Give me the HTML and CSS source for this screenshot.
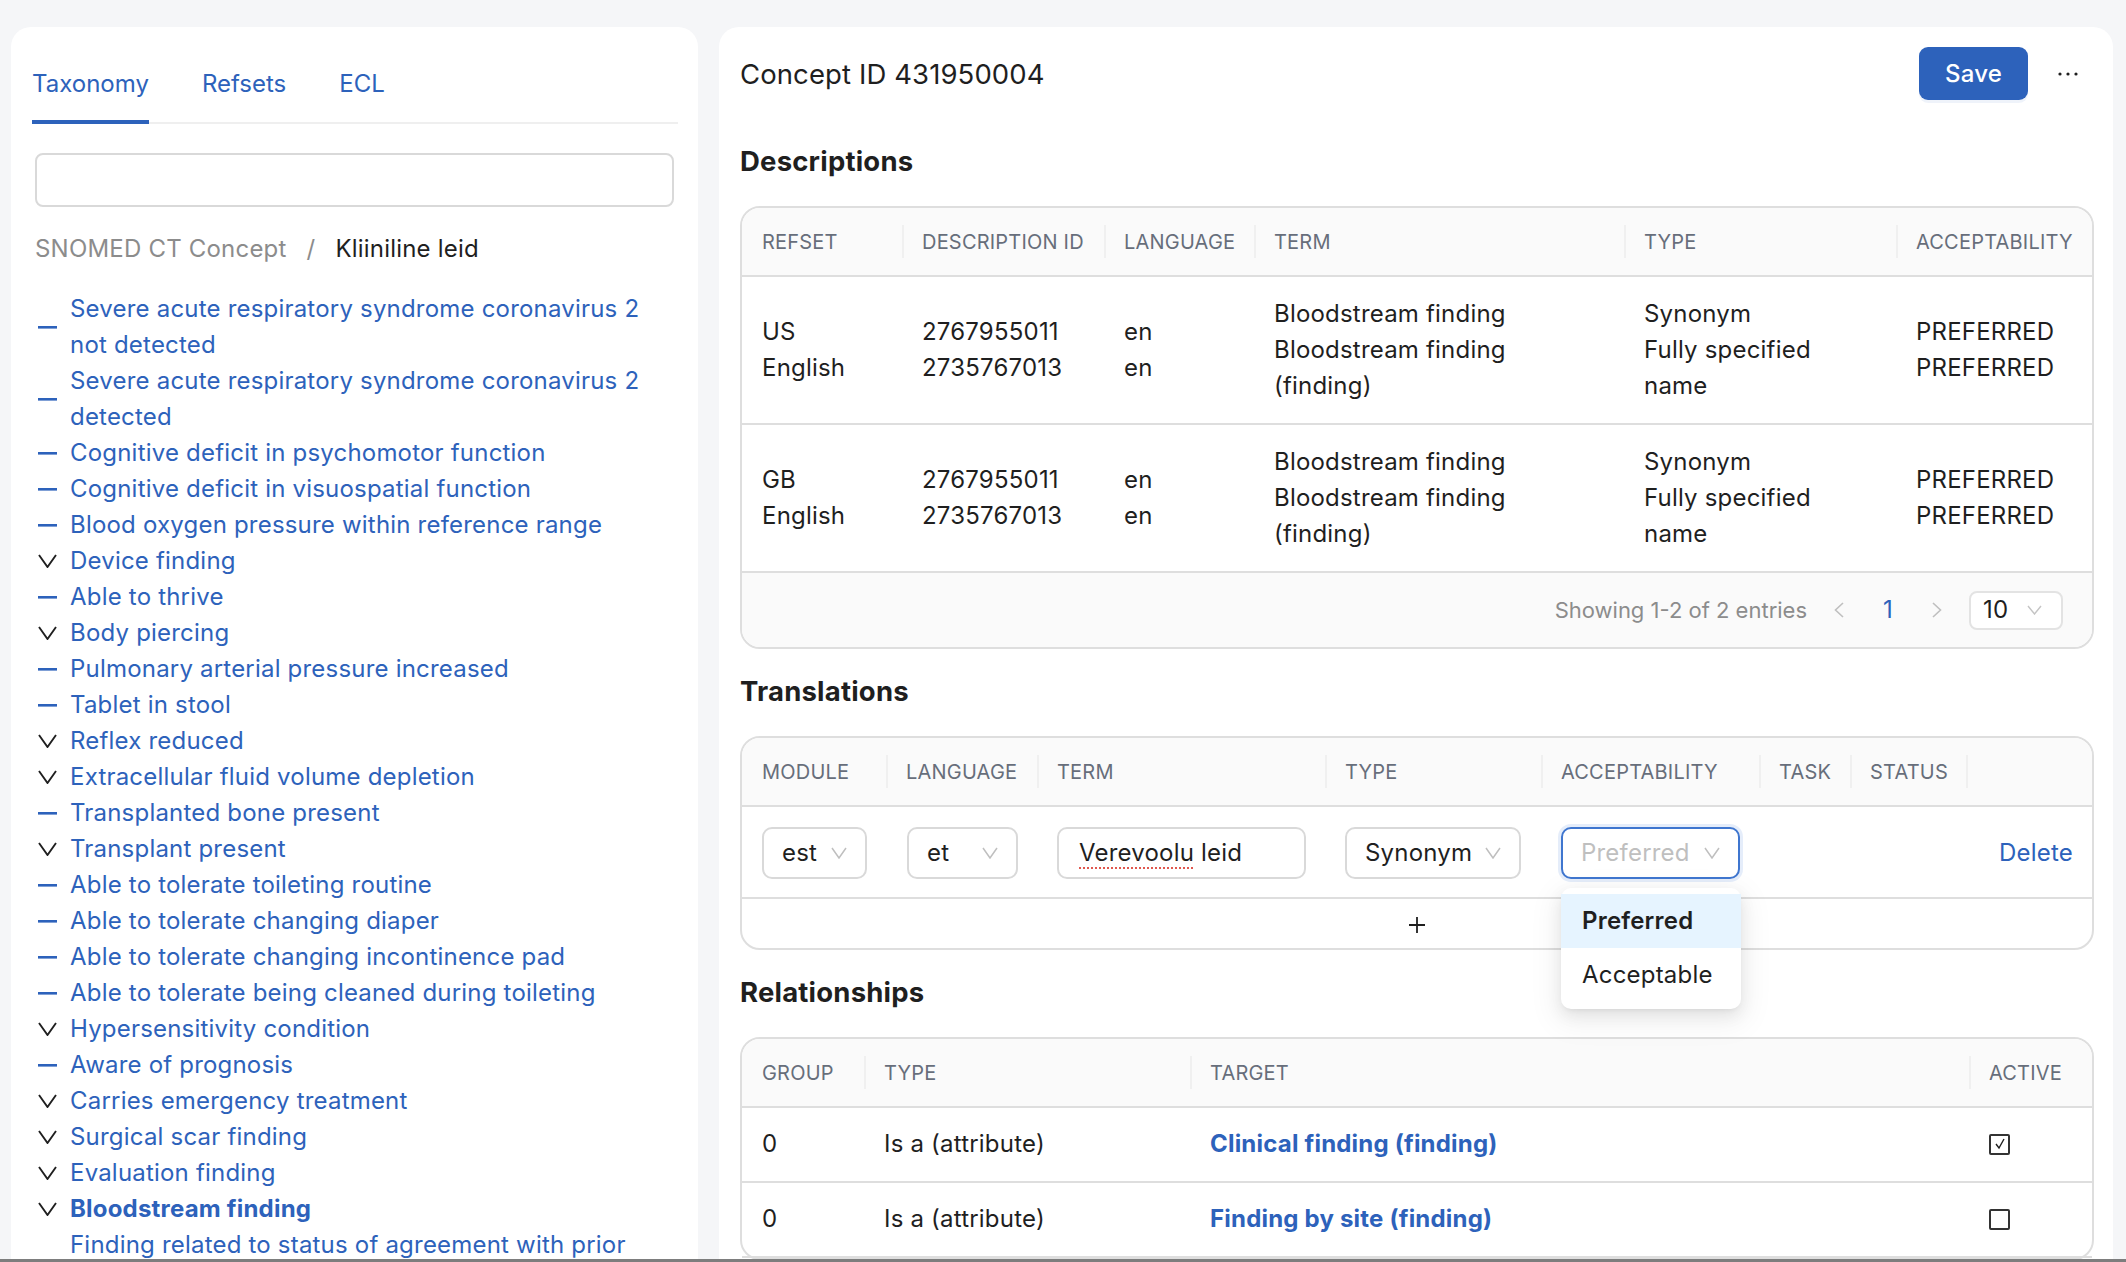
FILE: index.html
```html
<!DOCTYPE html>
<html lang="en">
<head>
<meta charset="utf-8">
<title>Concept ID 431950004</title>
<link rel="stylesheet" href="styles.css">
</head>
<body>
<div class="page">
  <aside class="card sidebar">
    <nav class="tabs">
      <span class="tab active">Taxonomy</span>
      <span class="tab">Refsets</span>
      <span class="tab">ECL</span>
    </nav>
    <div class="search"></div>
    <div class="crumbs">
      <span class="crumb-root">SNOMED CT Concept</span>
      <span class="crumb-sep">/</span>
      <span class="crumb-current">Kliiniline leid</span>
    </div>
    <ul class="tree">
      <li class="node"><span class="node-icon"><svg class="ic-dash" width="19" height="3" viewBox="0 0 19 3"><rect width="19" height="2.6" fill="currentColor"/></svg></span><span class="node-label">Severe acute respiratory syndrome coronavirus 2 not detected</span></li>
      <li class="node"><span class="node-icon"><svg class="ic-dash" width="19" height="3" viewBox="0 0 19 3"><rect width="19" height="2.6" fill="currentColor"/></svg></span><span class="node-label">Severe acute respiratory syndrome coronavirus 2 detected</span></li>
      <li class="node"><span class="node-icon"><svg class="ic-dash" width="19" height="3" viewBox="0 0 19 3"><rect width="19" height="2.6" fill="currentColor"/></svg></span><span class="node-label">Cognitive deficit in psychomotor function</span></li>
      <li class="node"><span class="node-icon"><svg class="ic-dash" width="19" height="3" viewBox="0 0 19 3"><rect width="19" height="2.6" fill="currentColor"/></svg></span><span class="node-label">Cognitive deficit in visuospatial function</span></li>
      <li class="node"><span class="node-icon"><svg class="ic-dash" width="19" height="3" viewBox="0 0 19 3"><rect width="19" height="2.6" fill="currentColor"/></svg></span><span class="node-label">Blood oxygen pressure within reference range</span></li>
      <li class="node"><span class="node-icon"><svg class="ic-chev" width="19" height="14" viewBox="0 0 19 14"><polyline points="1,1 9.5,13 18,1" fill="none" stroke="currentColor" stroke-width="1.9"/></svg></span><span class="node-label">Device finding</span></li>
      <li class="node"><span class="node-icon"><svg class="ic-dash" width="19" height="3" viewBox="0 0 19 3"><rect width="19" height="2.6" fill="currentColor"/></svg></span><span class="node-label">Able to thrive</span></li>
      <li class="node"><span class="node-icon"><svg class="ic-chev" width="19" height="14" viewBox="0 0 19 14"><polyline points="1,1 9.5,13 18,1" fill="none" stroke="currentColor" stroke-width="1.9"/></svg></span><span class="node-label">Body piercing</span></li>
      <li class="node"><span class="node-icon"><svg class="ic-dash" width="19" height="3" viewBox="0 0 19 3"><rect width="19" height="2.6" fill="currentColor"/></svg></span><span class="node-label">Pulmonary arterial pressure increased</span></li>
      <li class="node"><span class="node-icon"><svg class="ic-dash" width="19" height="3" viewBox="0 0 19 3"><rect width="19" height="2.6" fill="currentColor"/></svg></span><span class="node-label">Tablet in stool</span></li>
      <li class="node"><span class="node-icon"><svg class="ic-chev" width="19" height="14" viewBox="0 0 19 14"><polyline points="1,1 9.5,13 18,1" fill="none" stroke="currentColor" stroke-width="1.9"/></svg></span><span class="node-label">Reflex reduced</span></li>
      <li class="node"><span class="node-icon"><svg class="ic-chev" width="19" height="14" viewBox="0 0 19 14"><polyline points="1,1 9.5,13 18,1" fill="none" stroke="currentColor" stroke-width="1.9"/></svg></span><span class="node-label">Extracellular fluid volume depletion</span></li>
      <li class="node"><span class="node-icon"><svg class="ic-dash" width="19" height="3" viewBox="0 0 19 3"><rect width="19" height="2.6" fill="currentColor"/></svg></span><span class="node-label">Transplanted bone present</span></li>
      <li class="node"><span class="node-icon"><svg class="ic-chev" width="19" height="14" viewBox="0 0 19 14"><polyline points="1,1 9.5,13 18,1" fill="none" stroke="currentColor" stroke-width="1.9"/></svg></span><span class="node-label">Transplant present</span></li>
      <li class="node"><span class="node-icon"><svg class="ic-dash" width="19" height="3" viewBox="0 0 19 3"><rect width="19" height="2.6" fill="currentColor"/></svg></span><span class="node-label">Able to tolerate toileting routine</span></li>
      <li class="node"><span class="node-icon"><svg class="ic-dash" width="19" height="3" viewBox="0 0 19 3"><rect width="19" height="2.6" fill="currentColor"/></svg></span><span class="node-label">Able to tolerate changing diaper</span></li>
      <li class="node"><span class="node-icon"><svg class="ic-dash" width="19" height="3" viewBox="0 0 19 3"><rect width="19" height="2.6" fill="currentColor"/></svg></span><span class="node-label">Able to tolerate changing incontinence pad</span></li>
      <li class="node"><span class="node-icon"><svg class="ic-dash" width="19" height="3" viewBox="0 0 19 3"><rect width="19" height="2.6" fill="currentColor"/></svg></span><span class="node-label">Able to tolerate being cleaned during toileting</span></li>
      <li class="node"><span class="node-icon"><svg class="ic-chev" width="19" height="14" viewBox="0 0 19 14"><polyline points="1,1 9.5,13 18,1" fill="none" stroke="currentColor" stroke-width="1.9"/></svg></span><span class="node-label">Hypersensitivity condition</span></li>
      <li class="node"><span class="node-icon"><svg class="ic-dash" width="19" height="3" viewBox="0 0 19 3"><rect width="19" height="2.6" fill="currentColor"/></svg></span><span class="node-label">Aware of prognosis</span></li>
      <li class="node"><span class="node-icon"><svg class="ic-chev" width="19" height="14" viewBox="0 0 19 14"><polyline points="1,1 9.5,13 18,1" fill="none" stroke="currentColor" stroke-width="1.9"/></svg></span><span class="node-label">Carries emergency treatment</span></li>
      <li class="node"><span class="node-icon"><svg class="ic-chev" width="19" height="14" viewBox="0 0 19 14"><polyline points="1,1 9.5,13 18,1" fill="none" stroke="currentColor" stroke-width="1.9"/></svg></span><span class="node-label">Surgical scar finding</span></li>
      <li class="node"><span class="node-icon"><svg class="ic-chev" width="19" height="14" viewBox="0 0 19 14"><polyline points="1,1 9.5,13 18,1" fill="none" stroke="currentColor" stroke-width="1.9"/></svg></span><span class="node-label">Evaluation finding</span></li>
      <li class="node current"><span class="node-icon"><svg class="ic-chev" width="19" height="14" viewBox="0 0 19 14"><polyline points="1,1 9.5,13 18,1" fill="none" stroke="currentColor" stroke-width="1.9"/></svg></span><span class="node-label">Bloodstream finding</span></li>
      <li class="node"><span class="node-icon"><svg class="ic-dash" width="19" height="3" viewBox="0 0 19 3"><rect width="19" height="2.6" fill="currentColor"/></svg></span><span class="node-label">Finding related to status of agreement with prior notification</span></li>
    </ul>
  </aside>

  <main class="card detail">
    <header class="detail-head">
      <h1 class="concept-id">Concept ID 431950004</h1>
      <button class="btn-primary">Save</button>
      <button class="btn-more" aria-label="More"><svg width="20" height="4" viewBox="0 0 20 4"><circle cx="2" cy="2" r="1.6" fill="#1f1f1f"/><circle cx="10" cy="2" r="1.6" fill="#1f1f1f"/><circle cx="18" cy="2" r="1.6" fill="#1f1f1f"/></svg></button>
    </header>

    <h2 class="section-title">Descriptions</h2>
    <div class="table-box">
      <table class="grid">
        <thead>
          <tr>
            <th class="d-refset">REFSET</th>
            <th class="d-id">DESCRIPTION ID</th>
            <th class="d-lang">LANGUAGE</th>
            <th class="d-term">TERM</th>
            <th class="d-type">TYPE</th>
            <th class="d-acc">ACCEPTABILITY</th>
          </tr>
        </thead>
        <tbody>
          <tr>
            <td>US<br>English</td>
            <td>2767955011<br>2735767013</td>
            <td>en<br>en</td>
            <td>Bloodstream finding<br>Bloodstream finding<br>(finding)</td>
            <td>Synonym<br>Fully specified<br>name</td>
            <td>PREFERRED<br>PREFERRED</td>
          </tr>
          <tr>
            <td>GB<br>English</td>
            <td>2767955011<br>2735767013</td>
            <td>en<br>en</td>
            <td>Bloodstream finding<br>Bloodstream finding<br>(finding)</td>
            <td>Synonym<br>Fully specified<br>name</td>
            <td>PREFERRED<br>PREFERRED</td>
          </tr>
        </tbody>
      </table>
      <div class="table-foot">
        <span class="total">Showing 1-2 of 2 entries</span>
        <span class="pg-arrow"><svg width="10" height="16" viewBox="0 0 10 16"><polyline points="9,1 1.5,8 9,15" fill="none" stroke="currentColor" stroke-width="1.6"/></svg></span>
        <span class="pg-current">1</span>
        <span class="pg-arrow"><svg width="10" height="16" viewBox="0 0 10 16"><polyline points="1,1 8.5,8 1,15" fill="none" stroke="currentColor" stroke-width="1.6"/></svg></span>
        <span class="size-select">10<svg width="15" height="10" viewBox="0 0 15 10"><polyline points="1,1 7.5,9 14,1" fill="none" stroke="currentColor" stroke-width="1.4"/></svg></span>
      </div>
    </div>

    <h2 class="section-title">Translations</h2>
    <div class="table-box">
      <table class="grid">
        <thead>
          <tr>
            <th class="t-module">MODULE</th>
            <th class="t-lang">LANGUAGE</th>
            <th class="t-term">TERM</th>
            <th class="t-type">TYPE</th>
            <th class="t-acc">ACCEPTABILITY</th>
            <th class="t-task">TASK</th>
            <th class="t-status">STATUS</th>
            <th class="t-action"></th>
          </tr>
        </thead>
        <tbody>
          <tr class="edit-row">
            <td><span class="select w-module">est<svg width="16" height="12" viewBox="0 0 16 12"><polyline points="1,1 8,11 15,1" fill="none" stroke="currentColor" stroke-width="1.5"/></svg></span></td>
            <td><span class="select w-lang">et<svg width="16" height="12" viewBox="0 0 16 12"><polyline points="1,1 8,11 15,1" fill="none" stroke="currentColor" stroke-width="1.5"/></svg></span></td>
            <td><span class="text-input"><span class="misspelled">Verevoolu</span> leid</span></td>
            <td><span class="select w-type">Synonym<svg width="16" height="12" viewBox="0 0 16 12"><polyline points="1,1 8,11 15,1" fill="none" stroke="currentColor" stroke-width="1.5"/></svg></span></td>
            <td>
              <div class="select-wrap">
                <span class="select w-acc focused"><span class="placeholder">Preferred</span><svg width="16" height="12" viewBox="0 0 16 12"><polyline points="1,1 8,11 15,1" fill="none" stroke="currentColor" stroke-width="1.5"/></svg></span>
                <ul class="menu">
                  <li class="menu-item selected">Preferred</li>
                  <li class="menu-item">Acceptable</li>
                </ul>
              </div>
            </td>
            <td></td>
            <td></td>
            <td class="action"><span class="link">Delete</span></td>
          </tr>
          <tr class="add-row">
            <td colspan="8"><svg width="18" height="18" viewBox="0 0 18 18"><path d="M9 1v16M1 9h16" stroke="#1f1f1f" stroke-width="1.8"/></svg></td>
          </tr>
        </tbody>
      </table>
    </div>

    <h2 class="section-title">Relationships</h2>
    <div class="table-box">
      <table class="grid">
        <thead>
          <tr>
            <th class="r-group">GROUP</th>
            <th class="r-type">TYPE</th>
            <th class="r-target">TARGET</th>
            <th class="r-active">ACTIVE</th>
          </tr>
        </thead>
        <tbody>
          <tr class="rel-row">
            <td>0</td>
            <td>Is a (attribute)</td>
            <td><span class="link strong">Clinical finding (finding)</span></td>
            <td><span class="checkbox"><svg width="16" height="16" viewBox="0 0 16 16"><polyline points="4,8 7,12 12,3" fill="none" stroke="#1f1f1f" stroke-width="1.4"/></svg></span></td>
          </tr>
          <tr class="rel-row">
            <td>0</td>
            <td>Is a (attribute)</td>
            <td><span class="link strong">Finding by site (finding)</span></td>
            <td><span class="checkbox"></span></td>
          </tr>
        </tbody>
      </table>
    </div>
  </main>
</div>
<div class="dock-edge"></div>
</body>
</html>
```

FILE: styles.css
```css
* {
  box-sizing: border-box;
  margin: 0;
  padding: 0;
}

html, body {
  height: 100%;
}

body {
  background: #f5f6f8;
  font-family: Inter, "Noto Sans", sans-serif;
  font-size: 24px;
  line-height: 36px;
  letter-spacing: 0.2px;
  color: #1f1f1f;
  overflow: hidden;
}

.page {
  display: flex;
  align-items: flex-start;
  gap: 21px;
  padding: 27px 13px 0 11px;
  height: 100vh;
  overflow: hidden;
}

.card {
  background: #fff;
  border-radius: 20px;
  min-height: 1400px;
}

/* ---------- sidebar ---------- */
.sidebar {
  width: 687px;
  flex: none;
  padding: 39px 20px 0 21px;
}

.tabs {
  display: flex;
  gap: 53px;
  border-bottom: 2px solid #efefef;
}

.tab {
  color: #2d62bb;
  letter-spacing: 0;
  padding-bottom: 18px;
  border-bottom: 4px solid transparent;
  margin-bottom: -2px;
}

.tab.active {
  border-bottom-color: #2d62bb;
}

.search {
  height: 54px;
  margin: 29px 4px 0 3px;
  border: 2px solid #d9d9d9;
  border-radius: 8px;
}

.crumbs {
  display: flex;
  margin: 24px 0 0 3px;
  color: #8c8c8c;
}

.crumb-sep {
  margin: 0 20px;
}

.crumb-current {
  color: #1f1f1f;
}

.tree {
  list-style: none;
  margin: 24px 0 0 3px;
}

.node {
  display: flex;
  align-items: center;
  color: #2d62bb;
}

.node-icon {
  width: 35px;
  flex: none;
  display: flex;
  align-items: center;
  padding-left: 3px;
}

.ic-chev {
  color: #1f1f1f;
}

.node-label {
  flex: 1;
}

.node.current .node-label {
  font-weight: 700;
}

/* ---------- detail ---------- */
.detail {
  flex: 1;
  padding: 20px 19px 0 21px;
}

.detail-head {
  display: flex;
  align-items: center;
  height: 53px;
}

.concept-id {
  flex: 1;
  font-size: 27.5px;
  font-weight: 400;
  line-height: 36px;
  letter-spacing: 0.1px;
}

.btn-primary {
  width: 109px;
  height: 53px;
  border: 0;
  border-radius: 9px;
  background: #2d62bb;
  color: #fff;
  font-family: inherit;
  font-size: 24px;
  font-weight: 500;
  letter-spacing: 0.2px;
  box-shadow: 0 3px 0 rgba(45, 98, 187, 0.08);
}

.btn-more {
  display: flex;
  align-items: center;
  margin: 0 16px 0 30px;
  border: 0;
  background: none;
}

.section-title {
  font-size: 27.5px;
  font-weight: 700;
  line-height: 36px;
  margin: 43px 0 27px;
}

.table-box + .section-title {
  margin-top: 24px;
}

.table-box {
  border: 2px solid #dedede;
  border-radius: 20px;
}

.grid {
  width: 100%;
  table-layout: fixed;
  border-collapse: separate;
  border-spacing: 0;
}

.grid th {
  position: relative;
  height: 69px;
  padding: 0 20px;
  background: #fafafa;
  border-bottom: 2px solid #dedede;
  font-size: 20px;
  font-weight: 400;
  color: #676e7b;
  text-align: left;
  white-space: nowrap;
}

.grid th:first-child {
  border-top-left-radius: 18px;
}

.grid th:last-child {
  border-top-right-radius: 18px;
}

.grid th + th::before {
  content: "";
  position: absolute;
  left: 0;
  top: 50%;
  width: 2px;
  height: 33px;
  margin-top: -17px;
  background: #f0f0f0;
}

.grid td {
  padding: 19px 20px;
  vertical-align: middle;
  border-bottom: 2px solid #dedede;
}

/* descriptions columns */
.d-refset { width: 160px; }
.d-id { width: 202px; }
.d-lang { width: 150px; }
.d-term { width: 370px; }
.d-type { width: 272px; }
.d-acc { width: 196px; }

.table-foot {
  display: flex;
  align-items: center;
  justify-content: flex-end;
  height: 74px;
  padding-right: 29px;
  background: #fafafa;
  border-radius: 0 0 18px 18px;
}

.total {
  font-size: 22px;
  letter-spacing: 0;
  color: #8c8c8c;
  margin-right: 27px;
}

.pg-arrow {
  display: flex;
  color: #bfbfbf;
}

.pg-current {
  color: #2d62bb;
  margin: 0 39px;
}

.size-select {
  display: flex;
  align-items: center;
  justify-content: space-between;
  width: 94px;
  height: 39px;
  margin-left: 27px;
  padding: 0 19px 0 12px;
  border: 2px solid #e3e3e3;
  border-radius: 8px;
  background: #fff;
}

.size-select svg {
  color: #c4c4c4;
}

/* translations columns */
.t-module { width: 144px; }
.t-lang { width: 151px; }
.t-term { width: 288px; }
.t-type { width: 216px; }
.t-acc { width: 218px; }
.t-task { width: 91px; }
.t-status { width: 116px; }
.t-action { width: 126px; }

.edit-row td {
  padding: 20px 20px 18px;
}

.select {
  display: flex;
  align-items: center;
  justify-content: space-between;
  height: 52px;
  padding: 0 18px 0 18px;
  border: 2px solid #d9d9d9;
  border-radius: 10px;
  background: #fff;
}

.select svg {
  color: #bfbfbf;
  flex: none;
}

.w-module { width: 105px; }
.w-lang { width: 111px; }
.w-type { width: 176px; }
.w-acc { width: 179px; }

.edit-row td:nth-child(2) {
  padding-left: 21px;
}

.text-input {
  display: flex;
  align-items: center;
  width: 249px;
  height: 52px;
  padding: 0 20px;
  border: 2px solid #d9d9d9;
  border-radius: 10px;
  white-space: pre;
}

.misspelled {
  text-decoration: underline dotted #e0584f;
  text-decoration-thickness: 2px;
  text-underline-offset: 6px;
}

.select.focused {
  border-color: #3f76cf;
  box-shadow: 0 0 0 3px rgba(45, 110, 210, 0.12);
}

.placeholder {
  color: #bfbfbf;
}

.select-wrap {
  position: relative;
}

.menu {
  position: absolute;
  top: calc(100% + 9px);
  left: 0;
  z-index: 5;
  width: 180px;
  padding: 6px 0 7px;
  list-style: none;
  background: #fff;
  border-radius: 10px;
  box-shadow: 0 6px 16px rgba(0, 0, 0, 0.08), 0 3px 6px -4px rgba(0, 0, 0, 0.12), 0 9px 28px 8px rgba(0, 0, 0, 0.05);
}

.menu-item {
  display: flex;
  align-items: center;
  height: 54px;
  padding: 0 21px;
}

.menu-item.selected {
  background: #e6f4ff;
  font-weight: 600;
}

.action {
  text-align: right;
}

.grid td.action {
  padding-right: 19px;
}

.link {
  color: #2d62bb;
}

.link.strong {
  font-weight: 700;
}

.add-row td {
  height: 49px;
  padding: 0;
  border-bottom: 0;
  text-align: center;
}

.add-row svg {
  display: inline-block;
  vertical-align: middle;
}

/* relationships columns */
.r-group { width: 122px; }
.r-type { width: 326px; }
.r-target { width: 779px; }
.r-active { width: 123px; }

.rel-row td {
  padding: 18px 20px 19px;
}

.checkbox {
  display: flex;
  align-items: center;
  justify-content: center;
  width: 21px;
  height: 21px;
  border: 2px solid #333;
  border-radius: 2px;
}

.dock-edge {
  position: fixed;
  left: 0;
  right: 0;
  bottom: 0;
  height: 3px;
  background: #7d7d7d;
}
```
